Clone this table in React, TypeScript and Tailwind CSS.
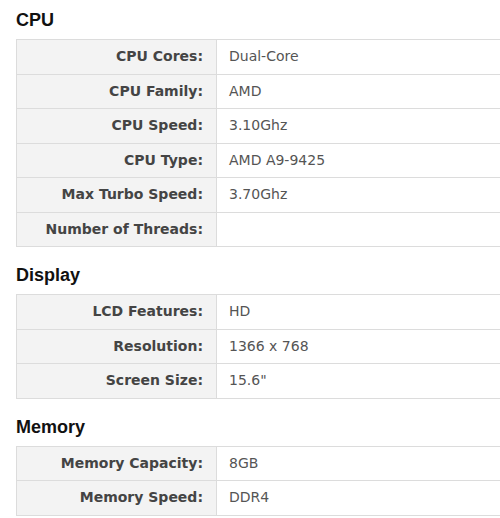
const sections = [
  {
    title: "CPU",
    rows: [
      ["CPU Cores:", "Dual-Core"],
      ["CPU Family:", "AMD"],
      ["CPU Speed:", "3.10Ghz"],
      ["CPU Type:", "AMD A9-9425"],
      ["Max Turbo Speed:", "3.70Ghz"],
      ["Number of Threads:", ""],
    ],
  },
  {
    title: "Display",
    rows: [
      ["LCD Features:", "HD"],
      ["Resolution:", "1366 x 768"],
      ["Screen Size:", '15.6"'],
    ],
  },
  {
    title: "Memory",
    rows: [
      ["Memory Capacity:", "8GB"],
      ["Memory Speed:", "DDR4"],
    ],
  },
];

const SpecTable = ({ rows }: { rows: string[][] }) => (
  <div className="w-[520px] border-t border-l border-[#dcdcdc]">
    {rows.map(([label, value]) => (
      <div key={label} className="flex h-[34.5px] border-b border-[#dcdcdc]">
        <div className="flex w-[200px] items-center justify-end border-r border-[#dcdcdc] bg-[#f3f3f3] px-[13px] text-[14px] font-bold text-[#444]">
          {label}
        </div>
        <div className="flex flex-1 items-center px-[12px] text-[14px] text-[#555]">
          {value}
        </div>
      </div>
    ))}
  </div>
);

export default function App() {
  return (
    <div
      className="h-[518px] w-[500px] overflow-hidden bg-white pt-[9px] pl-4"
      style={{ fontFamily: '"DejaVu Sans", Verdana, sans-serif' }}
    >
      <div className="flex flex-col gap-[17px]">
        {sections.map((s) => (
          <div key={s.title}>
            <h2 className="mb-2 text-[18px] leading-[22px] font-bold text-[#111] [font-family:'Liberation_Sans',Arial,sans-serif]">
              {s.title}
            </h2>
            <SpecTable rows={s.rows} />
          </div>
        ))}
      </div>
    </div>
  );
}
